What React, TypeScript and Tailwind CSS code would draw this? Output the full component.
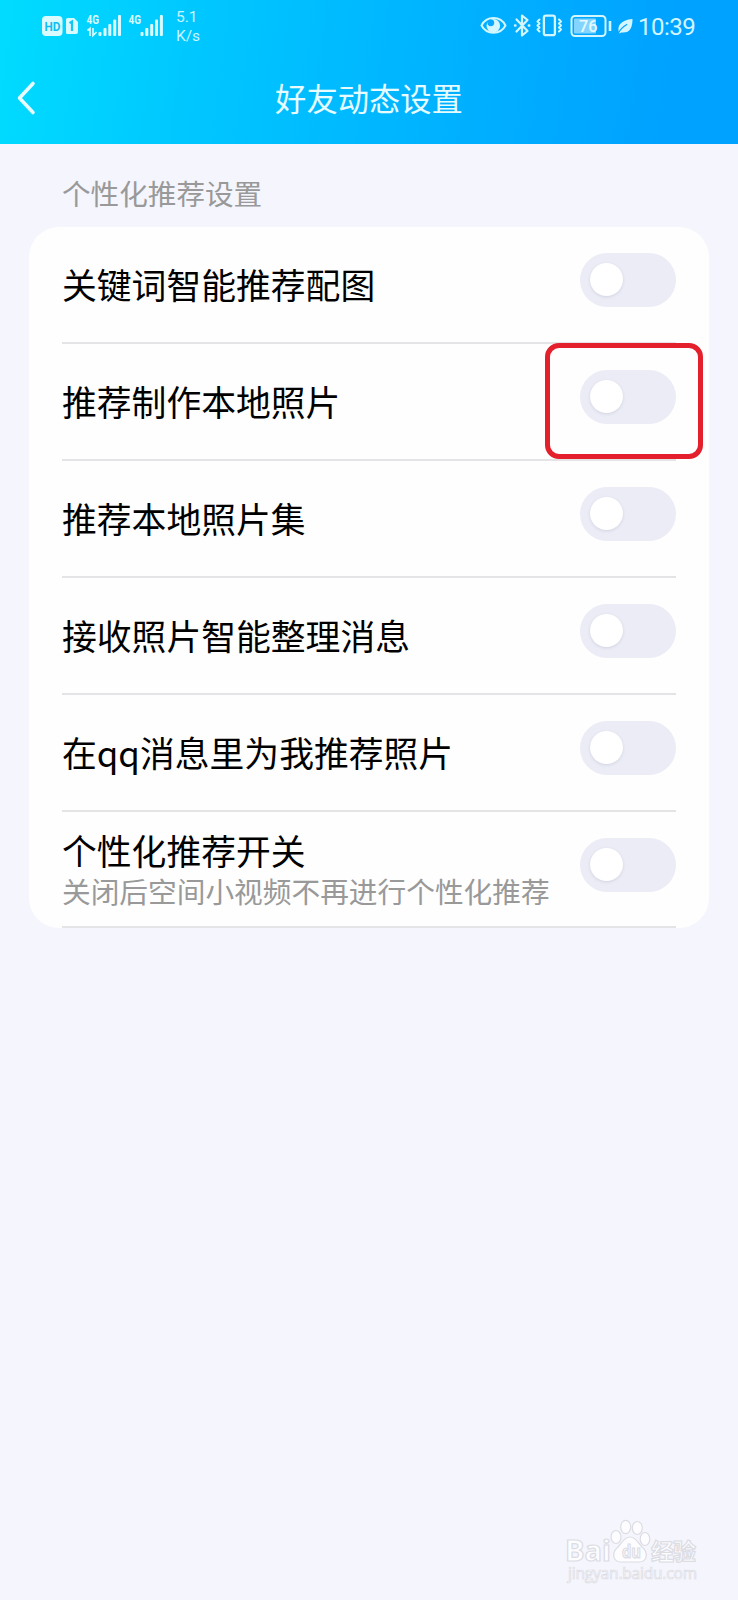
type Setting = {
  title: string;
  hint?: string;
};

const settings: Setting[] = [
  { title: "关键词智能推荐配图" },
  { title: "推荐制作本地照片" },
  { title: "推荐本地照片集" },
  { title: "接收照片智能整理消息" },
  { title: "在qq消息里为我推荐照片" },
  { title: "个性化推荐开关", hint: "关闭后空间小视频不再进行个性化推荐" },
];

function SignalIcons() {
  return (
    <svg width="124" height="24" viewBox="42 14 124 24" fill="#d9fbff">
      <rect x="42" y="16" width="20.5" height="20" rx="4" />
      <text x="44.4" y="31" fontSize="13.5" fontWeight="700" fill="#14bdf0" fontFamily="Roboto, sans-serif" textLength="16" lengthAdjust="spacingAndGlyphs">
        HD
      </text>
      <path d="M67.5 18h6.5l4 4v10a2 2 0 0 1-2 2h-8.500a1.500 1.500 0 0 1-1.500-1.500v-13a1.500 1.500 0 0 1 1.500-1.500z" />
      <path d="M69.500 23.200l2.500-1.700v9.500" fill="none" stroke="#14c6f5" strokeWidth="2.200" />
      <text x="86.500" y="24" fontSize="12" fontWeight="700" fontFamily="Roboto, sans-serif" textLength="12.500" lengthAdjust="spacingAndGlyphs">
        4G
      </text>
      <path d="M87.500 30.500l2.500-2v7.500M93 28v7.500l3.500-3.500" fill="none" stroke="#d9fbff" strokeWidth="1.700" />
      <rect x="98.500" y="32" width="3" height="4" rx="1" />
      <rect x="103.500" y="28" width="3" height="8" rx="1" />
      <rect x="108.300" y="24" width="3" height="12" rx="1" />
      <rect x="113.200" y="19.500" width="3" height="16.500" rx="1" />
      <rect x="118" y="15" width="3" height="21" rx="1" />
      <text x="128.500" y="24" fontSize="12" fontWeight="700" fontFamily="Roboto, sans-serif" textLength="12.500" lengthAdjust="spacingAndGlyphs">
        4G
      </text>
      <rect x="140.500" y="32" width="3" height="4" rx="1" />
      <rect x="145.300" y="28" width="3" height="8" rx="1" />
      <rect x="150.200" y="24" width="3" height="12" rx="1" />
      <rect x="155" y="19.500" width="3" height="16.500" rx="1" />
      <rect x="159.900" y="15" width="3" height="21" rx="1" />
    </svg>
  );
}

function DeviceIcons() {
  return (
    <svg width="154" height="26" viewBox="480 13 154 26" fill="none" stroke="#d3f6ff" strokeWidth="2" strokeLinecap="round" strokeLinejoin="round">
      {/* eye comfort */}
      <path d="M481.500 25.500c5-10 19-10 24 0c-5 9.500-19 9.500-24 0z" />
      <circle cx="493.300" cy="25.700" r="6.800" fill="#d3f6ff" stroke="none" />
      <circle cx="490.800" cy="22.800" r="3.400" fill="#09a9ff" stroke="none" />
      {/* bluetooth */}
      <path d="M516.500 19.500l11 11.500l-5.500 4.500v-20l5.500 4.500l-11 11.500" strokeWidth="2.200" />
      <path d="M515 25.500h.5M528.800 25.500h.5" strokeWidth="2.400" />
      {/* vibrate */}
      <rect x="543.900" y="15.600" width="11" height="19.600" rx="2" strokeWidth="2.300" />
      <path d="M539.500 19.500l-2 2l2 2l-2 2l2 2l-2 2l2 2M559 19.500l2 2l-2 2l2 2l-2 2l2 2l-2 2" strokeWidth="2" />
      {/* battery */}
      <rect x="571.500" y="16" width="34" height="20" rx="3.500" />
      <rect x="574" y="18.500" width="22" height="15" rx="1" fill="#83d5ff" stroke="none" />
      <path d="M610 21v10" strokeWidth="2.600" strokeLinecap="butt" />
      <text x="579" y="32" fontSize="17" fontWeight="500" fill="#e4faff" stroke="none" fontFamily="Roboto, sans-serif" textLength="18.500" lengthAdjust="spacingAndGlyphs">
        76
      </text>
      {/* leaf */}
      <path d="M619 32.500c-2-6 1-12.500 13.500-13.500c0 9-3 14.500-11 13.500l-2.500 1z" fill="#d3f6ff" stroke="none" />
      <path d="M618.800 32.500c1.500-3 4.500-6 8-8" stroke="#05a5ff" strokeWidth="1.200" />
    </svg>
  );
}

function Header() {
  return (
    <header className="h-36 bg-[linear-gradient(98deg,#00dcff_0%,#00c6ff_28%,#00b2ff_60%,#00a2ff_90%)] text-[#e6fcff]">
      <div className="flex h-[52px] items-center pl-[42px] pr-[40px]">
        <SignalIcons />
        <div className="ml-[10px] pt-px font-[Roboto,sans-serif] text-[15.5px] leading-[18.5px] text-[#c9f5ff]">
          5.1
          <br />
          K/s
        </div>
        <div className="ml-auto flex items-center gap-[4px]">
          <DeviceIcons />
          <span className="w-[60px] pt-px font-[Roboto,sans-serif] text-[24px] leading-6 tracking-[-0.5px] text-[#d3f6ff]">
            10:39
          </span>
        </div>
      </div>
      <div className="grid h-[92px] grid-cols-[60px_1fr_60px] items-center">
        <svg className="ml-[16px]" width="22" height="36" viewBox="0 0 22 36" fill="none" stroke="currentColor" strokeWidth="3.6" strokeLinecap="round" strokeLinejoin="round">
          <path d="M17 3.500L3.500 18L17 32.500" />
        </svg>
        <h1 className="text-center text-[31.3px] leading-10">好友动态设置</h1>
      </div>
    </header>
  );
}

function Toggle() {
  return (
    <span className="flex h-[54px] w-24 shrink-0 rounded-full bg-[#ebecf5] p-[10px]">
      <span className="size-[33px] rounded-full bg-white shadow-[0_1px_3px_rgba(150,155,185,0.3)]" />
    </span>
  );
}

function SettingRow({ title, hint }: Setting) {
  return (
    <li className="flex h-[117px] items-start justify-between border-b-2 border-[#e4e4e6] last:h-[116px]">
      <div className={hint ? "pt-[15px]" : "pt-[34px]"}>
        <p className="text-[34.8px] leading-[46px] text-black">{title}</p>
        {hint && <p className="text-[28.7px] leading-[36px] whitespace-nowrap text-[#999]">{hint}</p>}
      </div>
      <div className="pt-[26px]">
        <Toggle />
      </div>
    </li>
  );
}

function Watermark() {
  return (
    <svg className="absolute top-[1512px] left-[560px]" width="145" height="76" viewBox="560 1512 145 76" fill="#fdfdff" stroke="#dcdce3" strokeWidth="1.2">
      <g fontFamily="'Open Sans', sans-serif" fontWeight="700">
        <text x="565" y="1561" fontSize="29" textLength="46" lengthAdjust="spacingAndGlyphs">
          Bai
        </text>
        <ellipse cx="616" cy="1537" rx="5" ry="6.500" />
        <ellipse cx="625.700" cy="1527" rx="5" ry="6.700" />
        <ellipse cx="637.300" cy="1528" rx="5" ry="6.500" />
        <ellipse cx="645" cy="1539" rx="4.800" ry="6.500" />
        <path d="M630 1537c6 0 8 6 12 10c7 6 5 15-3 15h-18c-8 0-10-9-3-15c4-4 6-10 12-10z" />
        <text x="622" y="1558" fontSize="18" textLength="19" lengthAdjust="spacingAndGlyphs" fill="#f6f6fd">
          du
        </text>
      </g>
      <text x="651" y="1560" fontSize="23" fontWeight="700" fontFamily="'Noto Sans CJK SC', sans-serif" textLength="45">
        经验
      </text>
      <text x="568" y="1579" fontSize="15.500" fontFamily="'Open Sans', sans-serif" textLength="129" strokeWidth="0.7">
        jingyan.baidu.com
      </text>
    </svg>
  );
}

export default function App() {
  return (
    <div className="relative h-[1600px] w-[738px] overflow-hidden bg-[#f4f5fd] font-['Noto_Sans_CJK_SC',sans-serif]">
      <Header />
      <main className="px-[29px] pt-[29px]">
        <h2 className="pl-[33px] text-[28.6px] leading-[40px] text-[#999]">个性化推荐设置</h2>
        <ul className="mt-[14px] rounded-[30px] bg-[#fefefe] pr-[33px] pl-[33px]">
          {settings.map((item) => (
            <SettingRow key={item.title} {...item} />
          ))}
        </ul>
      </main>
      <div className="absolute top-[343px] left-[545px] h-[116px] w-[158px] rounded-[14px] border-[5px] border-[#e3202b]" />
      <Watermark />
    </div>
  );
}
